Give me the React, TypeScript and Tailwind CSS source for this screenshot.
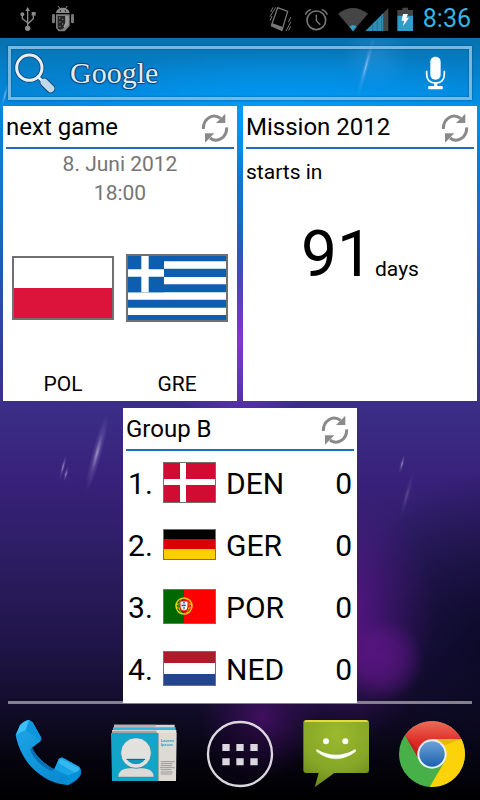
import type { ReactNode } from 'react'

type Team = { code: string; points: number; flag: ReactNode }

function Wallpaper() {
  return (
    <svg className="absolute inset-0 -z-10 h-full w-full" viewBox="0 0 480 800" preserveAspectRatio="none" aria-hidden="true">
      <defs>
        <linearGradient id="sky" x1="0" y1="0" x2="0" y2="1">
          <stop offset="0.04" stopColor="#076fa9" />
          <stop offset="0.09" stopColor="#0580cb" />
          <stop offset="0.135" stopColor="#0289df" />
          <stop offset="0.25" stopColor="#1471c8" />
          <stop offset="0.4" stopColor="#2c489f" />
          <stop offset="0.5" stopColor="#3b2f88" />
          <stop offset="0.6" stopColor="#38217a" />
          <stop offset="0.7" stopColor="#2c1d62" />
          <stop offset="0.8" stopColor="#20154a" />
          <stop offset="0.88" stopColor="#130d2b" />
          <stop offset="0.95" stopColor="#05040e" />
          <stop offset="1" stopColor="#000" />
        </linearGradient>
        <radialGradient id="cyan">
          <stop offset="0" stopColor="#00a0ff" stopOpacity="0.9" />
          <stop offset="1" stopColor="#00a0ff" stopOpacity="0" />
        </radialGradient>
        <radialGradient id="violet">
          <stop offset="0" stopColor="#8a35d6" stopOpacity="0.95" />
          <stop offset="1" stopColor="#6a35c6" stopOpacity="0" />
        </radialGradient>
        <radialGradient id="glow">
          <stop offset="0" stopColor="#7a14a8" stopOpacity="0.75" />
          <stop offset="1" stopColor="#5a1490" stopOpacity="0" />
        </radialGradient>
        <radialGradient id="orb">
          <stop offset="0" stopColor="#6d1796" stopOpacity="0.6" />
          <stop offset="0.5" stopColor="#6d1796" stopOpacity="0.45" />
          <stop offset="1" stopColor="#6d1796" stopOpacity="0" />
        </radialGradient>
        <radialGradient id="haze">
          <stop offset="0" stopColor="#6fb4ff" stopOpacity="0.2" />
          <stop offset="1" stopColor="#6fb4ff" stopOpacity="0" />
        </radialGradient>
        <radialGradient id="shade">
          <stop offset="0" stopColor="#05051c" stopOpacity="0.75" />
          <stop offset="1" stopColor="#05051c" stopOpacity="0" />
        </radialGradient>
        <radialGradient id="streak">
          <stop offset="0" stopColor="#fff" stopOpacity="0.5" />
          <stop offset="0.5" stopColor="#cfc8ff" stopOpacity="0.15" />
          <stop offset="1" stopColor="#cfc8ff" stopOpacity="0" />
        </radialGradient>
      </defs>
      <rect width="480" height="800" fill="url(#sky)" />
      <ellipse cx="290" cy="115" rx="260" ry="65" fill="url(#cyan)" />
      <ellipse cx="240" cy="340" rx="70" ry="110" fill="url(#violet)" />
      <ellipse cx="490" cy="640" rx="150" ry="170" fill="url(#shade)" />
      <ellipse cx="345" cy="615" rx="90" ry="130" fill="url(#glow)" opacity="0.85" />
      <circle cx="382" cy="659" r="42" fill="url(#orb)" />
      <ellipse cx="262" cy="718" rx="62" ry="62" fill="url(#glow)" opacity="0.6" />
      <circle cx="376" cy="55" r="34" fill="url(#haze)" />
      <ellipse cx="366" cy="66" rx="3" ry="32" transform="rotate(15 366 66)" fill="url(#streak)" />
      <ellipse cx="5" cy="95" rx="2" ry="14" transform="rotate(15 5 95)" fill="url(#streak)" />
      <ellipse cx="97" cy="453" rx="5" ry="40" transform="rotate(15 97 453)" fill="url(#streak)" />
      <ellipse cx="63" cy="467" rx="2" ry="13" transform="rotate(15 63 467)" fill="url(#streak)" />
      <ellipse cx="66" cy="474" rx="2" ry="8" transform="rotate(15 66 474)" fill="url(#streak)" />
      <ellipse cx="402" cy="464" rx="2" ry="10" transform="rotate(15 402 464)" fill="url(#streak)" />
      <ellipse cx="407" cy="495" rx="3" ry="24" transform="rotate(15 407 495)" fill="url(#streak)" opacity="0.4" />
    </svg>
  )
}

function StatusBar() {
  return (
    <header className="flex h-[38px] items-center justify-between bg-black pl-[19px] pr-[9px]">
      <div className="flex items-center gap-[14px]">
        <svg className="h-[27px] w-[18px]" viewBox="57 18 54 81" role="img" aria-label="USB connected">
          <g fill="none" stroke="#8c8c8c" strokeWidth="4">
            <path d="M83 30V84M67 46V56L83 68M100 46V56L83 72" />
          </g>
          <path d="M83 21L90 33H76Z" fill="#8c8c8c" />
          <circle cx="83" cy="85" r="8" fill="#8c8c8c" />
          <circle cx="67" cy="43" r="6" fill="#8c8c8c" />
          <path d="M95 36H107V47H95Z" fill="#8c8c8c" />
        </svg>
        <svg className="h-7 w-6" viewBox="153 15 72 84" role="img" aria-label="USB debugging">
          <path d="M174 18L180 26M202 18L196 26" stroke="#8c8c8c" strokeWidth="3" />
          <path d="M168 39C169 29 178 23 188 23S208 29 209 39Z" fill="#8c8c8c" />
          <rect x="156" y="42" width="9" height="28" rx="4" fill="#777" />
          <rect x="213" y="42" width="9" height="28" rx="4" fill="#777" />
          <path d="M168 43H209V78L194 94H176L168 84Z" fill="#7d7d7d" />
          <path d="M173 48H196V66L192 84L180 90L173 84Z" fill="#242424" />
          <path d="M196 48H206V74L194 84L190 80L196 68Z" fill="#999" />
          <g fill="#8c8c8c">
            <circle cx="179" cy="54" r="2" /><circle cx="188" cy="58" r="2" /><circle cx="180" cy="66" r="2" />
            <circle cx="188" cy="72" r="2" /><circle cx="180" cy="79" r="2" />
            <circle cx="181" cy="33" r="2" fill="#000" /><circle cx="196" cy="33" r="2" fill="#000" />
          </g>
        </svg>
      </div>
      <div className="flex items-center gap-2">
        <svg className="mr-1 h-7 w-6" viewBox="87 15 72 84" role="img" aria-label="Vibrate">
          <path d="M116 23L146 34L129 91L97 77Z" fill="none" stroke="#777" strokeWidth="4" strokeLinejoin="round" />
          <path d="M101 70L133 82L129 92L97 79Z" fill="#777" />
          <path d="M95 36L102 22M93 50L110 22M93 62L99 48M156 51L148 67M156 65L141 93M155 79L149 91" stroke="#777" strokeWidth="3" />
        </svg>
        <svg className="h-[26px] w-[25px]" viewBox="195 18 75 78" role="img" aria-label="Alarm set">
          <circle cx="232" cy="61" r="28" fill="none" stroke="#777" strokeWidth="5" />
          <path d="M232 44V62L244 74" fill="none" stroke="#777" strokeWidth="4" />
          <path d="M199 44C202 36 208 31 216 28M265 44C262 36 256 31 248 28" fill="none" stroke="#777" strokeWidth="4" />
        </svg>
        <svg className="h-[25px] w-[52px]" viewBox="291 18 156 75" role="img" aria-label="Wi-Fi and mobile signal">
          <path d="M294 38Q339 4 384 38L339 91Z" fill="#454545" />
          <path d="M328 77Q339 67 350 77L339 91Z" fill="#2f9dc9" />
          <path d="M376 90L431 35V90Z" fill="#2b8fb6" />
          <path d="M398 68V90M412 54V90M425 41V90" stroke="#1c6d8f" strokeWidth="2" />
          <path d="M432 34L445 21V90H432Z" fill="#454545" />
        </svg>
        <svg className="h-[25px] w-4" viewBox="471 18 48 75" role="img" aria-label="Battery charging">
          <path d="M487 20H504V27H519V44H472V27H487Z" fill="#454545" />
          <path d="M472 44H519V90H472Z" fill="#2f9dc9" />
          <path d="M489 39H504L499 50H507L489 76L493 59H485Z" fill="#fff" />
        </svg>
        <time className="ml-[2px] text-[25px] leading-[38px] text-[#33b5e5]">8:36</time>
      </div>
    </header>
  )
}

function SearchBar() {
  return (
    <div className="mx-2 mt-2 flex h-[54px] items-center justify-between border-[3px] border-[#79b8de] pl-[3px] pr-[23px] shadow-[0_0_2px_#05507f,inset_0_0_2px_#05507f]">
      <button className="flex flex-1 items-center gap-[14px] text-left" aria-label="Google search">
        <svg className="size-[42px]" viewBox="42 156 126 126" aria-hidden="true">
          <g fill="none" stroke="#174875" strokeLinecap="round">
            <circle cx="88" cy="203" r="38" strokeWidth="14" />
            <path d="M114 231L128 244" strokeWidth="13" />
            <path d="M133 247L152 266" strokeWidth="28" />
          </g>
          <g fill="none" stroke="#e4eff6" strokeLinecap="round">
            <circle cx="88" cy="203" r="38" strokeWidth="9" />
            <path d="M114 231L128 244" strokeWidth="8" />
            <path d="M133 247L152 266" strokeWidth="22" stroke="#c0d9e8" />
          </g>
        </svg>
        <span className="font-['Liberation_Serif',serif] text-[30px] leading-9 text-[#dcecf5] [text-shadow:1px_0_1px_#123f73,-1px_0_1px_#123f73,0_1px_1px_#123f73,0_-1px_1px_#123f73]">
          Google
        </span>
      </button>
      <button aria-label="Voice search">
        <svg className="h-9 w-[22px]" viewBox="552 165 66 108" aria-hidden="true">
          <rect x="571" y="170" width="31" height="69" rx="15" fill="#fff" />
          <path d="M560 212V222C560 240 571 249 587 249S613 240 613 222V212" fill="none" stroke="#fff" strokeWidth="5" />
          <path d="M582 248H592V258H605Q609 258 609 263T605 268H568Q564 268 564 263T568 258H582Z" fill="#fff" />
        </svg>
      </button>
    </div>
  )
}

function Widget({ title, children }: { title: string; children: ReactNode }) {
  return (
    <section className="min-h-[295px] bg-white px-[3px] text-black">
      <div className="flex h-[43px] items-center justify-between border-b-2 border-[#1f6fb8] pr-[5px]">
        <h2 className="whitespace-nowrap text-2xl leading-10">{title}</h2>
        <button className="pt-[2px]" aria-label={`Refresh ${title}`}>
          <svg className="h-[30px] w-7" viewBox="603 40 84 90" aria-hidden="true">
            <g fill="none" stroke="#8a8a8a" strokeWidth="9">
              <path d="M610 88C609 58 638 38 662 56" />
              <path d="M680 83C681 113 652 132 630 115" />
            </g>
            <path d="M676 42V70H648Z" fill="#8a8a8a" />
            <path d="M615 101H643L615 129Z" fill="#8a8a8a" />
          </svg>
        </button>
      </div>
      {children}
    </section>
  )
}

function GreekFlag() {
  return (
    <svg className="h-[68px] w-[102px] border-2 border-[#707070]" viewBox="0 0 294 192" preserveAspectRatio="none" role="img" aria-label="Greece">
      <rect width="294" height="192" fill="#0d5eaf" />
      <path d="M108 27H294M108 74H294M0 120H294M0 166H294" stroke="#fff" strokeWidth="22" />
      <path d="M0 0H108V109H0Z" fill="#0d5eaf" />
      <path d="M51 0V109M0 51H108" stroke="#fff" strokeWidth="22" />
    </svg>
  )
}

const teams: Team[] = [
  {
    code: 'DEN',
    points: 0,
    flag: (
      <svg className="h-[41px] w-[53px] border border-[#707070]" viewBox="0 0 51 39" role="img" aria-label="Denmark">
        <path d="M0 0H51V39H0Z" fill="#d00c33" />
        <path d="M19 0V39M0 19H51" stroke="#fff" strokeWidth="6" />
      </svg>
    ),
  },
  {
    code: 'GER',
    points: 0,
    flag: (
      <svg className="h-[31px] w-[53px] border border-[#707070]" viewBox="0 0 3 3" preserveAspectRatio="none" role="img" aria-label="Germany">
        <path d="M0 0H3V1H0Z" />
        <path d="M0 1H3V2H0Z" fill="#d00" />
        <path d="M0 2H3V3H0Z" fill="#ffce00" />
      </svg>
    ),
  },
  {
    code: 'POR',
    points: 0,
    flag: (
      <svg className="h-[35px] w-[53px] border border-[#707070]" viewBox="0 0 51 33" role="img" aria-label="Portugal">
        <path d="M0 0H51V33H0Z" fill="red" />
        <path d="M0 0H20V33H0Z" fill="#060" />
        <circle cx="20" cy="16" r="8" fill="none" stroke="#e8d800" strokeWidth="1.4" />
        <ellipse cx="20" cy="16" rx="8" ry="3" fill="none" stroke="#e8d800" />
        <ellipse cx="20" cy="16" rx="5" ry="8" fill="none" stroke="#c8c000" strokeWidth="0.8" />
        <path d="M16 11H24V17Q24 21 20 21T16 17Z" fill="#fff" stroke="#e00" />
        <path d="M20 12V20M17.500 15.500H22.500" stroke="#2a4a9a" strokeWidth="1.6" strokeDasharray="1.600 1" />
      </svg>
    ),
  },
  {
    code: 'NED',
    points: 0,
    flag: (
      <svg className="h-[35px] w-[53px] border border-[#707070]" viewBox="0 0 3 3" preserveAspectRatio="none" role="img" aria-label="Netherlands">
        <path d="M0 0H3V1H0Z" fill="#ae1c28" />
        <path d="M0 1H3V2H0Z" fill="#fff" />
        <path d="M0 2H3V3H0Z" fill="#21468b" />
      </svg>
    ),
  },
]

function NextGame() {
  return (
    <Widget title="next game">
      <p className="pt-px text-center text-[21px] leading-[29px] text-[#757575]">
        8. Juni 2012
        <br />
        18:00
      </p>
      <div className="grid grid-cols-2 text-center text-[21px] leading-[34px]">
        <div>
          <div className="flex h-[159px] items-center justify-center">
            <svg className="h-16 w-[102px] border-2 border-[#707070]" viewBox="0 0 2 2" preserveAspectRatio="none" role="img" aria-label="Poland">
              <path d="M0 0H2V1H0Z" fill="#fff" />
              <path d="M0 1H2V2H0Z" fill="#dc143c" />
            </svg>
          </div>
          POL
        </div>
        <div>
          <div className="flex h-[159px] items-center justify-center">
            <GreekFlag />
          </div>
          GRE
        </div>
      </div>
    </Widget>
  )
}

function Countdown() {
  return (
    <Widget title="Mission 2012">
      <p className="pt-[9px] text-[21px] leading-[29px]">starts in</p>
      <p className="mt-9 flex items-baseline justify-center gap-[2px] text-[21px]">
        <span className="text-[64px] leading-[64px]">91</span>
        days
      </p>
    </Widget>
  )
}

function GroupTable() {
  return (
    <Widget title="Group B">
      <table className="w-full text-[30px] leading-[40px]">
        <tbody>
          {teams.map((t, i) => (
            <tr key={t.code} className="h-[62px]">
              <td className="w-[37px] pl-[2px] pt-1">{i + 1}.</td>
              <td className="w-[63px]">{t.flag}</td>
              <td className="pt-1">{t.code}</td>
              <td className="pr-[2px] pt-1 text-right">{t.points}</td>
            </tr>
          ))}
        </tbody>
      </table>
    </Widget>
  )
}

function Dock() {
  return (
    <nav className="grid grid-cols-5 justify-items-center pb-[11px] pt-[13px]">
      <button aria-label="Phone">
        <svg className="size-[72px]" viewBox="36 51 216 216" aria-hidden="true">
          <defs>
            <linearGradient id="phone" x1="0" y1="0" x2="1" y2="1">
              <stop offset="0" stopColor="#1fa5e8" />
              <stop offset="1" stopColor="#0384cc" />
            </linearGradient>
          </defs>
          <path d="M47 104L60 75Q76 60 88 60L98 67L123 111Q126 121 119 126L96 143C106 165 133 193 163 208L176 178Q181 170 189 173L238 200Q245 207 243 222Q237 240 205 255C170 255 125 236 92 199C68 170 52 137 47 104Z" fill="url(#phone)" />
          <path d="M60 76Q75 61 87 61L77 91Q62 94 48 106Z" fill="#3cc0f5" />
          <path d="M88 61L97 67L122 111Q124 119 118 120L78 91Z" fill="#0d96dc" />
          <path d="M96 143C106 165 133 193 163 208L156 213C125 203 98 174 90 147Z" fill="#0670b4" />
          <path d="M163 208L176 178Q181 171 189 174L236 200Q243 207 237 214L205 227Z" fill="#17a4e6" />
          <path d="M183 176L238 205L229 221L174 188Z" fill="#4bc5f5" opacity="0.6" />
          <path d="M205 227L240 211Q242 233 205 254Q194 253 186 250Z" fill="#0390d8" />
        </svg>
      </button>
      <button aria-label="Contacts">
        <svg className="size-[72px]" viewBox="324 51 216 216" aria-hidden="true">
          <path d="M342 74H524V84H342Z" fill="#d9d5d2" />
          <path d="M342 74H467V80H342Z" fill="#b8aaa8" />
          <path d="M339 82H527V91H339Z" fill="#36b4dc" />
          <path d="M336 90H529V100H336Z" fill="#e5e1dd" />
          <path d="M336 92H470V100H336Z" fill="#aaa19e" />
          <path d="M333 99H475V243H336Z" fill="#12a5ca" />
          <path d="M475 98H530L528 243H475Z" fill="#dddad5" />
          <path d="M354 231C355 211 370 205 389 204H426C447 205 461 212 462 231Z" fill="#dcdad6" stroke="#087f9d" strokeWidth="1" />
          <circle cx="408" cy="159" r="46" fill="#e3e1dd" stroke="#0c86a5" strokeWidth="2" />
          <path d="M379 177H436Q426 193 408 193T379 177Z" fill="#0f9abd" />
          <path d="M380 178H435" stroke="#066883" strokeWidth="3" />
          <text x="482" y="127" fontFamily="Liberation Sans, sans-serif" fontWeight="700" fontSize="12" fill="#25a0c2">Lauren</text>
          <text x="482" y="139" fontFamily="Liberation Sans, sans-serif" fontWeight="700" fontSize="12" fill="#25a0c2">Ipsum</text>
          <path d="M482 185H524M482 191H518M482 197H516M480 203H524M482 209H514M482 216H518M482 222H516" stroke="#999" strokeWidth="3" />
        </svg>
      </button>
      <button aria-label="All apps">
        <svg className="size-[72px]" viewBox="612 51 216 216" aria-hidden="true">
          <circle cx="720" cy="162" r="96" fill="#120620" fillOpacity="0.35" stroke="#dcd8e0" strokeWidth="7" />
          <path d="M667 132h22v21h-22zM709 132h22v21h-22zM751 132h22v21h-22zM667 175h22v21h-22zM709 175h22v21h-22zM751 175h22v21h-22z" fill="#dcd8e0" />
        </svg>
      </button>
      <button aria-label="Messaging">
        <svg className="size-[72px]" viewBox="180 51 216 216" aria-hidden="true">
          <defs>
            <radialGradient id="bubble" cx="0.5" cy="0.2" r="0.9">
              <stop offset="0" stopColor="#9bba2f" />
              <stop offset="0.6" stopColor="#86a627" />
              <stop offset="1" stopColor="#67831a" />
            </radialGradient>
          </defs>
          <path d="M198 60H379Q387 60 387 69V210Q387 219 378 219H283L224 262L236 219H199Q190 219 190 210V69Q190 60 198 60Z" fill="url(#bubble)" />
          <path d="M193 66Q195 60 201 60H377Q383 60 384 66Z" fill="#e0dd3c" />
          <circle cx="258" cy="124" r="9" fill="#fff" />
          <circle cx="316" cy="124" r="9" fill="#fff" />
          <path d="M229 152Q287 202 347 153" fill="none" stroke="#91d02a" strokeWidth="3" />
          <path d="M229 147Q288 182 347 147V155Q288 198 230 155Z" fill="#fff" />
        </svg>
      </button>
      <button aria-label="Chrome">
        <svg className="size-[72px]" viewBox="468 51 216 216" aria-hidden="true">
          <defs>
            <linearGradient id="lens" x1="0" y1="0" x2="0" y2="1">
              <stop offset="0" stopColor="#6da2d8" />
              <stop offset="1" stopColor="#1d62ae" />
            </linearGradient>
            <linearGradient id="red" x1="0" y1="0" x2="0" y2="1">
              <stop offset="0" stopColor="#ee6a55" />
              <stop offset="0.6" stopColor="#db2a25" />
            </linearGradient>
          </defs>
          <circle cx="576" cy="162" r="99" fill="#47b049" />
          <path d="M576 117H664A99 99 0 0 1 569 261L614 184Z" fill="#fcd20a" />
          <path d="M495 106A99 99 0 0 1 664 117H576L533 172Z" fill="url(#red)" />
          <path d="M590 118H664L614 135Z" fill="#d8a706" opacity="0.6" />
          <path d="M495 106L533 172L535 150Z" fill="#a61c1c" opacity="0.5" />
          <circle cx="576" cy="162" r="44" fill="#eceff4" />
          <circle cx="576" cy="162" r="38" fill="url(#lens)" />
        </svg>
      </button>
    </nav>
  )
}

export default function App() {
  return (
    <div className="relative isolate flex min-h-screen flex-col overflow-hidden bg-black font-[Roboto,sans-serif]">
      <Wallpaper />
      <StatusBar />
      <SearchBar />
      <main className="relative z-10 px-[3px] pt-[6px]">
        <div className="grid grid-cols-2 gap-[6px]">
          <NextGame />
          <Countdown />
        </div>
        <div className="mx-auto mt-[7px] w-[calc(50%-3px)]">
          <GroupTable />
        </div>
      </main>
      <div className="mx-2 -mt-[2px] h-[3px] bg-[#85808f]" />
      <Dock />
    </div>
  )
}
